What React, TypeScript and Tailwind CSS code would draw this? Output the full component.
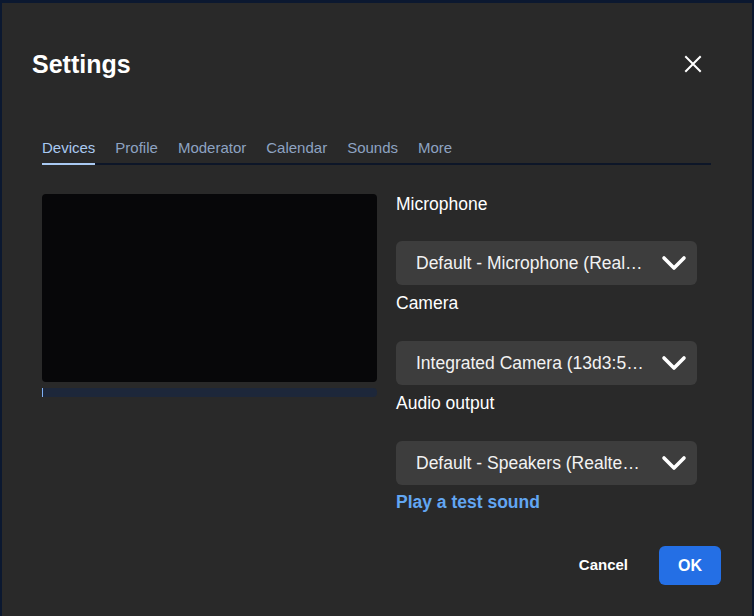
import React from "react";

const tabs = ["Devices", "Profile", "Moderator", "Calendar", "Sounds", "More"];

function Chevron() {
  return (
    <svg width="26" height="16" viewBox="0 0 26 16" fill="none">
      <path d="M3 3 L13 13 L23 3" stroke="#ffffff" strokeWidth="3.6" strokeLinecap="round" strokeLinejoin="round" />
    </svg>
  );
}

function Select({ value }: { value: string }) {
  return (
    <div className="flex h-[44px] w-[301px] items-center justify-between rounded-[6px] bg-[#3d3d3d] pl-[20px] pr-[10px]">
      <span className="text-[17.5px] leading-[20px] text-[#f2f2f2]">{value}</span>
      <Chevron />
    </div>
  );
}

export default function App() {
  return (
    <div
      className="h-[616px] w-[754px] bg-[#0b1830] pt-[3px] px-[2px]"
      style={{ fontFamily: '"Liberation Sans", Arial, sans-serif' }}
    >
      <div className="flex h-full flex-col bg-[#292929]">
        <div className="mt-[45px] flex h-[32px] items-center justify-between pl-[30px] pr-[50px]">
          <h1 className="text-[25px] font-bold leading-[32px] text-white">Settings</h1>
          <svg width="18" height="18" viewBox="0 0 18 18">
            <path d="M2 2 L16 16 M16 2 L2 16" stroke="#ffffff" strokeWidth="2" strokeLinecap="square" />
          </svg>
        </div>

        <div className="ml-[40px] mr-[41px] mt-[58px] flex gap-[20px] border-b-2 border-[#0d1628]">
          {tabs.map((t, i) => (
            <div
              key={t}
              className={
                i === 0
                  ? "-mb-[2px] border-b-2 border-[#a9c9f2] pb-[5px] text-[15px] leading-[20px] text-[#a9c9f2]"
                  : "-mb-[2px] border-b-2 border-transparent pb-[5px] text-[15px] leading-[20px] text-[#8ea3c2]"
              }
            >
              {t}
            </div>
          ))}
        </div>

        <div className="ml-[40px] mt-[29px] flex gap-[19px]">
          <div className="flex flex-col">
            <div className="h-[188px] w-[335px] rounded-[4px] bg-[#070709]" />
            <div className="mt-[6px] h-[9px] w-[335px] rounded-r-[4px] border-l border-[#7fb0f5] bg-[#1d273a]" />
          </div>
          <div className="flex flex-col">
            <div className="mb-[27px] mt-0 text-[17.5px] leading-[20px] text-white">Microphone</div>
            <Select value="Default - Microphone (Real…" />
            <div className="mb-[28px] mt-[8px] text-[17.5px] leading-[20px] text-white">Camera</div>
            <Select value="Integrated Camera (13d3:5…" />
            <div className="mb-[28px] mt-[8px] text-[17.5px] leading-[20px] text-white">Audio output</div>
            <Select value="Default - Speakers (Realte…" />
            <div className="mt-[7px] text-[17.5px] font-bold leading-[20px] text-[#62a6f2]">Play a test sound</div>
          </div>
        </div>

        <div className="mt-[34px] flex items-center justify-end pr-[31px]">
          <button className="mr-[15px] px-[16px] text-[15px] font-bold text-white">Cancel</button>
          <button className="h-[39px] w-[62px] rounded-[6px] bg-[#246fe5] text-[16px] font-bold text-white">OK</button>
        </div>
      </div>
    </div>
  );
}
